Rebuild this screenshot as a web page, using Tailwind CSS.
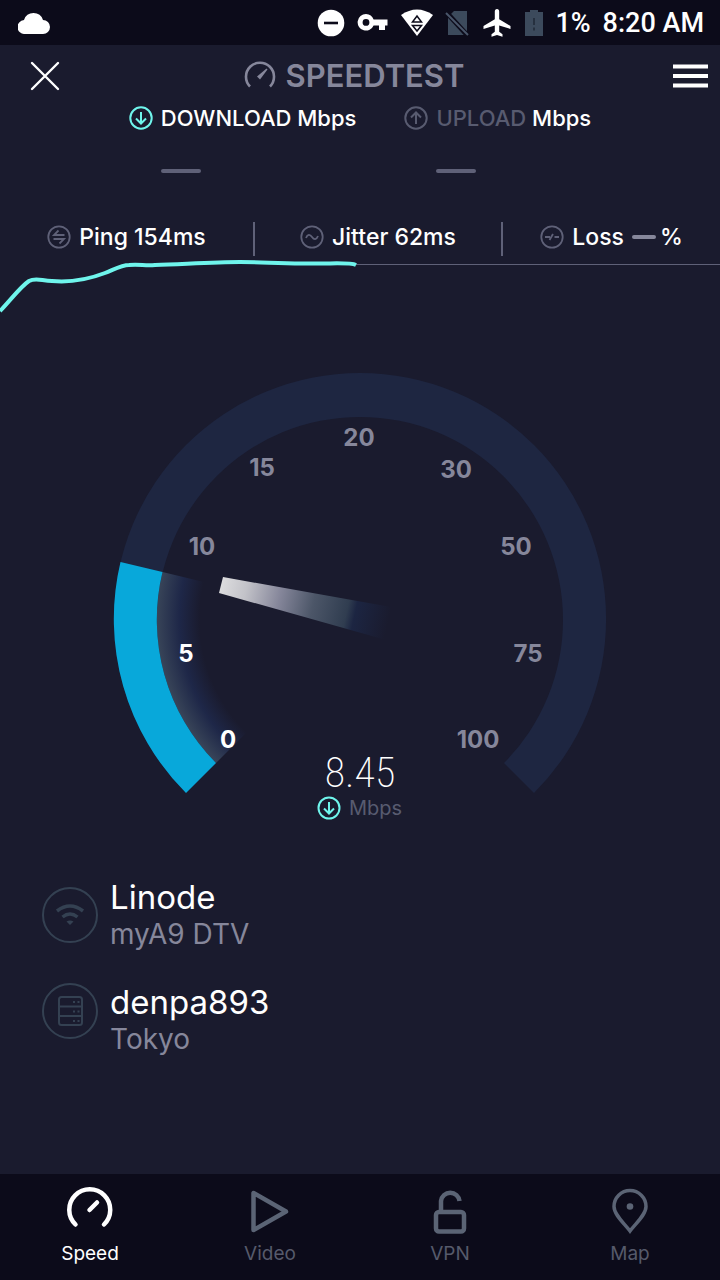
<!DOCTYPE html>
<html lang="en">
<head>
  <meta charset="UTF-8">
  <meta name="viewport" content="width=device-width, initial-scale=1.0">
  <title>Speedtest</title>
  <script src="https://cdn.jsdelivr.net/npm/@tailwindcss/browser@4"></script>
</head>
<body class="bg-[#1a1b2e] font-['Inter',sans-serif] text-white">
  <div class="flex min-h-screen flex-col">

    <!-- Android status bar -->
    <div class="flex h-[45px] items-center bg-[#0c0b1a] pr-4 pl-[18px] font-['Roboto',sans-serif]">
      <svg class="h-[22px] w-8" viewBox="0 0 32 22" fill="#fff"><path d="M7 22a7 7 0 0 1-1-14a10 10 0 0 1 19 0A7 7 0 0 1 25 22z"/></svg>
      <div class="ml-auto flex items-center gap-3">
        <svg class="size-7" viewBox="0 0 28 28"><circle cx="14" cy="14" r="13.300" fill="#fff"/><path d="M7 14h14" stroke="#0c0b1a" stroke-width="2.600"/></svg>
        <svg class="h-7 w-8" viewBox="0 0 32 28" fill="#fff"><path fill-rule="evenodd" d="M9 5a8.300 8.300 0 1 0 7.600 11.500H22V21h6v-4.500h2.500v-6H16.600A8.300 8.300 0 0 0 9 5zm0 5a3.400 3.400 0 1 1 0 6.800a3.400 3.400 0 0 1 0-6.800z"/></svg>
        <svg class="h-7 w-8" viewBox="0 0 32 28"><path d="M0 6q16-11 32 0L16 27z" fill="#fff"/><path d="M11.500 13 16 7l4.500 6zM11.500 16.500h9L16 22z" fill="#fff" stroke="#0c0b1a" stroke-width="1.500"/></svg>
        <svg class="h-7 w-6" viewBox="0 0 24 28"><path d="M9 2h13v24H3V8z" fill="#3c4a5c"/><path d="M1 3 23 27" stroke="#0c0b1a" stroke-width="5"/><path d="M1 4 23 26" stroke="#4a566a" stroke-width="2"/></svg>
        <svg class="h-7 w-8" viewBox="0 0 32 28" fill="#fff"><path d="M16 0c1.500 0 2.200 1.200 2.200 2.600v7.600L29.500 17v3l-11.300-3.400v6.200l3.300 2.500v2.400L16 26l-5.500 1.700v-2.400l3.300-2.500v-6.200L2.500 20v-3l11.300-6.800V2.600C13.800 1.200 14.500 0 16 0z"/></svg>
        <svg class="h-7 w-[18px]" viewBox="0 0 18 28"><path d="M5 1h8v2h5v24H0V3h5z" fill="#3c4a5c"/><path d="M9 9v7M9 18.500v3" stroke="#26303f" stroke-width="2"/></svg>
        <span class="text-[27px] leading-8 font-medium">1%</span>
        <span class="text-[27px] leading-8 font-medium">8:20 AM</span>
      </div>
    </div>

    <!-- App header -->
    <header class="flex h-[61px] items-center pr-3">
      <div class="flex flex-1">
        <button type="button" aria-label="Close" class="pl-[30px]">
          <svg class="size-[30px]" viewBox="0 0 30 30" stroke="#fff" stroke-width="2.400" stroke-linecap="round"><path d="M2 2 28 28M28 2 2 28"/></svg>
        </button>
      </div>
      <h1 class="flex items-center gap-2.5 text-[31px] leading-8 font-semibold text-[#86879b]">
        <svg class="size-8" viewBox="0 0 32 32" fill="none" stroke="#86879b"><path d="M6 26.500A14 14 0 1 1 26 26.500" stroke-width="2.600"/><path d="M13 16.500 22.500 8.500l1 1-7.500 10z" fill="#86879b" stroke="none"/></svg>
        SPEEDTEST
      </h1>
      <div class="flex flex-1 justify-end">
        <button type="button" aria-label="Menu">
          <svg class="h-6 w-[35px]" viewBox="0 0 35 24" stroke="#fff" stroke-width="4"><path d="M0 2.500h35M0 12h35M0 21.500h35"/></svg>
        </button>
      </div>
    </header>

    <section class="flex justify-center gap-12 text-[22px] leading-6 font-medium">
      <div>
        <div class="flex items-center gap-2">
          <svg class="size-6" viewBox="0 0 24 24" fill="none" stroke="#6ff5ec" stroke-width="2"><circle cx="12" cy="12" r="10.700"/><path d="M12 6v11M7 12.500l5 5 5-5"/></svg>
          <span>DOWNLOAD Mbps</span>
        </div>
        <div class="mt-[39px] ml-8 h-1 w-10 rounded-full bg-[#5f6178]"></div>
      </div>
      <div>
        <div class="flex items-center gap-2">
          <svg class="size-6" viewBox="0 0 24 24" fill="none" stroke="#585b70" stroke-width="2"><circle cx="12" cy="12" r="10.700"/><path d="M12 18V7M7 11.500l5-5 5 5"/></svg>
          <span><span class="text-[#585b70]">UPLOAD</span> Mbps</span>
        </div>
        <div class="mt-[39px] ml-8 h-1 w-10 rounded-full bg-[#5f6178]"></div>
      </div>
    </section>

    <!-- Latency row -->
    <section class="mt-[49px] grid h-[34px] grid-cols-[255fr_248fr_217fr] text-[23px] leading-7 font-medium">
      <div class="flex items-center justify-center gap-2 border-r-2 border-[#5f6178] pb-1">
        <svg class="size-6" viewBox="0 0 24 24" fill="none" stroke="#5f6178" stroke-width="1.800"><circle cx="12" cy="12" r="10.700"/><path d="M17.500 10H7l4.500-4.500M6.500 14H17l-4.500 4.500"/></svg>
        <span>Ping 154ms</span>
      </div>
      <div class="flex items-center justify-center gap-2 border-r-2 border-[#5f6178] pb-1">
        <svg class="size-6" viewBox="0 0 24 24" fill="none" stroke="#5f6178" stroke-width="1.800"><circle cx="12" cy="12" r="10.700"/><path d="M6 13c1.500-4 4-4 6-1s4.500 3 6-1"/></svg>
        <span>Jitter 62ms</span>
      </div>
      <div class="flex items-center justify-center gap-2 pb-1">
        <svg class="size-6" viewBox="0 0 24 24" fill="none" stroke="#5f6178" stroke-width="1.800"><circle cx="12" cy="12" r="10.700"/><path d="M5 12h5M14.500 12H19M9.500 15 13 9"/></svg>
        <span>Loss</span>
        <span class="flex items-center gap-1"><span class="h-1 w-6 rounded-full bg-[#86879b]"></span>%</span>
      </div>
    </section>

    <!-- Throughput line -->
    <svg class="w-full" viewBox="0 256 720 60" fill="none">
      <path d="M356 264.500H720" stroke="#5f6178"/>
      <path d="M0 311C10 301 20 287 29 281C36 277 42 281 52 281C75 283 92 278 105 273C115 269 122 265 129 265C140 264 145 266 155 265C185 264 215 262 240 262C265 262 280 264 310 263.500C330 264 350 262 356 265" stroke="#6ff5ec" stroke-width="4"/>
    </svg>

    <!-- Gauge -->
    <svg class="w-full" viewBox="0 316 720 524" role="img" aria-label="Download speed 8.45 Mbps">
      <defs>
        <radialGradient id="glow" gradientUnits="userSpaceOnUse" cx="360" cy="619" r="203">
          <stop offset="0.790" stop-color="#1e2748" stop-opacity="0"/>
          <stop offset="0.890" stop-color="#1e2748"/>
          <stop offset="1" stop-color="#384458"/>
        </radialGradient>
        <linearGradient id="needle" gradientUnits="userSpaceOnUse" x1="221" y1="585" x2="388" y2="623">
          <stop offset="0" stop-color="#dcdcde"/>
          <stop offset="0.150" stop-color="#c2c2c8"/>
          <stop offset="0.350" stop-color="#85869a"/>
          <stop offset="0.550" stop-color="#4c5668"/>
          <stop offset="0.750" stop-color="#303d50"/>
          <stop offset="0.800" stop-color="#1c2542"/>
          <stop offset="1" stop-color="#1a1b2e"/>
        </linearGradient>
      </defs>
      <path d="M186 793A246 246 0 1 1 534 793L504 763A203 203 0 1 0 216 763Z" fill="#1e2641"/>
      <path d="M162.500 572A203 203 0 0 0 216 763L248 731A158 158 0 0 1 206 582.500Z" fill="url(#glow)"/>
      <path d="M120.500 562A246 246 0 0 0 186 793L216 763A203 203 0 0 1 162.500 572Z" fill="#08a8da"/>
      <path d="M223 577 391 607 386 640 219 593Z" fill="url(#needle)"/>
      <g font-size="24" font-weight="700" text-anchor="middle" fill="#86879b">
        <text x="228" y="748" fill="#fff">0</text>
        <text x="186" y="662" fill="#fff">5</text>
        <text x="202" y="555">10</text>
        <text x="262" y="476">15</text>
        <text x="359" y="446">20</text>
        <text x="456" y="478">30</text>
        <text x="516" y="555">50</text>
        <text x="528" y="662">75</text>
        <text x="478" y="748">100</text>
      </g>
      <text x="360" y="787" font-size="42" font-weight="200" text-anchor="middle" fill="#fff" class="font-['Roboto_Condensed','Liberation_Sans_Narrow',sans-serif]">8.45</text>
      <g fill="none" stroke="#6ff5ec" stroke-width="2"><circle cx="329" cy="808" r="10.500"/><path d="M329 802v11M324 808.500l5 5 5-5"/></g>
      <text x="349" y="815" font-size="20" fill="#585b70">Mbps</text>
    </svg>

    <!-- Connection details -->
    <section class="flex flex-col gap-[31px] px-[42px] pt-[38px] pb-8">
      <div class="flex items-center gap-3">
        <svg class="size-14" viewBox="0 0 56 56" fill="none" stroke="#344152"><circle cx="28" cy="28" r="27" stroke-width="2"/><path d="M15 24q13-10 26 0M20.500 30q7.500-6 15 0" stroke-width="3.500"/><path d="M24.500 34.500q3.500-2 7 0L28 38z" fill="#344152" stroke="none"/></svg>
        <div>
          <p class="text-[33px] leading-[38px]">Linode</p>
          <p class="text-[28px] leading-9 text-[#86879b]">myA9 DTV</p>
        </div>
      </div>
      <div class="flex items-start gap-3">
        <svg class="size-14" viewBox="0 0 56 56" fill="none" stroke="#344152" stroke-width="2"><circle cx="28" cy="28" r="27"/><rect x="17" y="14" width="23" height="28" rx="2.500"/><path d="M17 23.500h23M17 33h23"/><path d="M31 19h2M35.500 19h2M31 28.500h2M35.500 28.500h2M31 38h2M35.500 38h2"/></svg>
        <div>
          <p class="text-[33px] leading-[38px]">denpa893</p>
          <p class="text-[28px] leading-9 text-[#86879b]">Tokyo</p>
        </div>
      </div>
    </section>

    <!-- Bottom tabs -->
    <nav class="mt-auto grid h-[106px] grid-cols-4 bg-[#0c0b1a] pt-3 text-[19px] leading-6 text-[#565a6b]">
      <a href="#speed" class="flex flex-col items-center gap-2 text-white">
        <svg class="size-12" viewBox="0 0 48 48" fill="none" stroke="currentColor" stroke-width="4.500" stroke-linecap="round"><path d="M9.500 38.500A20.500 20.500 0 1 1 38 38.500M23.500 24 31 16.500"/></svg>
        Speed
      </a>
      <a href="#video" class="flex flex-col items-center gap-2">
        <svg class="size-12" viewBox="0 0 48 48" fill="none" stroke="#5b6475" stroke-width="4.500" stroke-linejoin="round"><path d="M7.500 7v37L40 25.500z"/></svg>
        Video
      </a>
      <a href="#vpn" class="flex flex-col items-center gap-2">
        <svg class="size-12" viewBox="0 0 48 48" fill="none" stroke="#5b6475" stroke-width="4.500"><rect x="10" y="26" width="28" height="19.500" rx="3"/><path d="M15 26V15a9.300 9.300 0 0 1 18.500 0"/></svg>
        VPN
      </a>
      <a href="#map" class="flex flex-col items-center gap-2">
        <svg class="size-12" viewBox="0 0 48 48" fill="none" stroke="#5b6475" stroke-width="3.500"><path d="M24 45C19 38 8 29 8 20.500a16 16 0 0 1 32 0C40 29 29 38 24 45z"/><circle cx="24" cy="20.500" r="3.300" fill="#5b6475" stroke="none"/></svg>
        Map
      </a>
    </nav>
  </div>
</body>
</html>
